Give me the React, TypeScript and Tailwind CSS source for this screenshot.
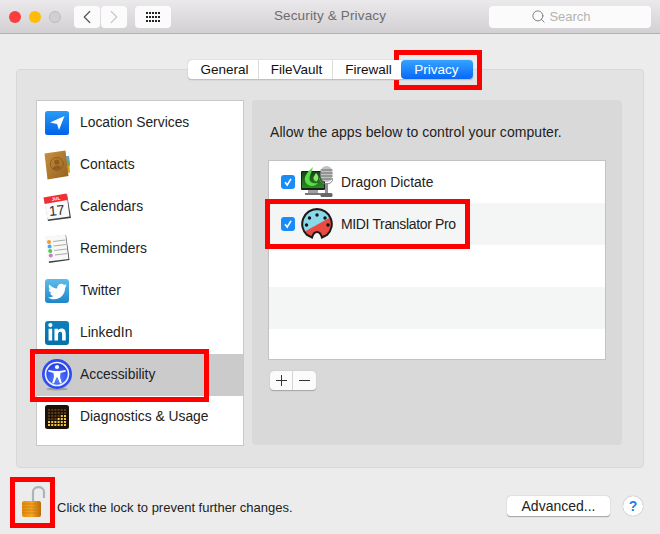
import React from 'react';
import { FaTwitter, FaLinkedinIn } from 'react-icons/fa';
import { ChevronLeft, ChevronRight, Search } from 'lucide-react';

const LocationIcon = () => (
  <svg width="24" height="24" viewBox="0 0 24 24">
    <defs>
      <linearGradient id="loc" x1="0" y1="0" x2="0" y2="1">
        <stop offset="0" stopColor="#2a9bf8" />
        <stop offset="1" stopColor="#0062e8" />
      </linearGradient>
    </defs>
    <rect width="24" height="24" rx="2.5" fill="url(#loc)" />
    <path d="M5 11.5 L19.5 5 L14 19 L12 13 Z" fill="#fff" />
  </svg>
);

const ContactsIcon = () => (
  <svg width="26" height="30" viewBox="0 0 26 30">
    <defs>
      <linearGradient id="book" x1="0" y1="0" x2="1" y2="1">
        <stop offset="0" stopColor="#c8913f" />
        <stop offset="1" stopColor="#96601f" />
      </linearGradient>
    </defs>
    <rect x="22" y="6" width="3.5" height="6" fill="#5fa7c9" transform="rotate(-6 24 10)" />
    <rect x="22.5" y="11" width="3.5" height="5" fill="#5db35d" transform="rotate(-6 24 14)" />
    <rect x="23" y="16" width="3" height="7" fill="#d9a52e" transform="rotate(-6 24 20)" />
    <path d="M0.5 3.5 L21.5 0.5 L24.5 26 L3.5 29.5 Z" fill="url(#book)" />
    <circle cx="12.8" cy="14" r="6.5" fill="none" stroke="#8f5c20" strokeWidth="1" />
    <circle cx="12.8" cy="12" r="2.6" fill="#8f5c20" />
    <path d="M8.1 18.5 Q12.8 13 17.5 17.7 Q12.8 21.5 8.1 18.5 Z" fill="#8f5c20" />
  </svg>
);

const CalendarIcon = () => (
  <svg width="28" height="28" viewBox="0 0 28 28">
    <path d="M1 5 L24 1 L28 25 L5 28 Z" fill="#3f4446" />
    <path d="M0.5 4.5 L23.5 0.5 L26.5 23.5 L4.5 26.5 Z" fill="#fafafa" />
    <path d="M0.5 4.5 L23.5 0.5 L24.5 7 L1.7 11 Z" fill="#ef2f35" />
    <text x="9" y="8" fontSize="4.5" fontWeight="700" fill="#fff" fontFamily="Liberation Sans, sans-serif" transform="rotate(-9 9 8)">JUL</text>
    <text x="6.5" y="23" fontSize="14" fill="#333" fontFamily="Liberation Sans, sans-serif" transform="rotate(-6 7 23)">17</text>
  </svg>
);

const RemindersIcon = () => (
  <svg width="26" height="30" viewBox="0 0 26 30">
    <path d="M1.5 3 L22 1 L25.5 26 L5 29 Z" fill="#3d4143" />
    <path d="M0.5 2.5 L21.5 0.5 L24.5 25 L4 27.5 Z" fill="#f8f8f6" />
    {[7, 11.5, 16, 20.5].map((y, i) => (
      <g key={y}>
        <circle cx={5 + i * 0.6} cy={y + 1} r="2" fill={['#f29a2e', '#3fa9f5', '#43d23f', '#d672dc'][i]} />
        <line x1={9 + i * 0.6} y1={y + 0.5} x2={21.5 + i * 0.6} y2={y - 1} stroke="#8a8a8a" strokeWidth="0.7" />
      </g>
    ))}
  </svg>
);

const TwitterIcon = () => (
  <div className="flex h-6 w-6 items-center justify-center rounded-[3px] bg-linear-to-b from-[#5cbcec] to-[#1d86c8] text-white">
    <FaTwitter size={19} />
  </div>
);

const LinkedinIcon = () => (
  <div className="flex h-6 w-6 items-center justify-center rounded-[3px] bg-linear-to-b from-[#0d80bd] to-[#0670a8] text-white">
    <FaLinkedinIn size={20} />
  </div>
);

const AccessibilityIcon = () => (
  <svg width="30" height="32" viewBox="0 0 30 32">
    <defs>
      <radialGradient id="acc" cx="0.5" cy="0.7" r="0.7">
        <stop offset="0" stopColor="#5a86ff" />
        <stop offset="1" stopColor="#2138e6" />
      </radialGradient>
    </defs>
    <ellipse cx="15" cy="30" rx="11" ry="1.5" fill="#a0a0a0" />
    <circle cx="15" cy="15" r="15" fill="#2f4cf2" />
    <circle cx="15" cy="15" r="11.5" fill="url(#acc)" stroke="#eef2ff" strokeWidth="1.6" />
    <circle cx="15" cy="8" r="2.1" fill="#fff" />
    <path d="M6.5 11 L12 12 H18 L23.5 11 L23.8 12.6 L18.5 14 L18 18 L19.8 24 L18 24.5 L15.6 18.6 H14.4 L12 24.5 L10.2 24 L12 18 L11.5 14 L6.2 12.6 Z" fill="#fff" />
  </svg>
);

const DiagnosticsIcon = () => {
  const heights = [2, 2, 2, 3, 4, 4];
  const cells = [];
  for (let r = 0; r < 6; r++) {
    for (let c = 0; c < 6; c++) {
      const lit = 6 - r <= heights[c];
      cells.push(<rect key={`${r}-${c}`} x={3 + c * 3.2} y={4 + r * 3} width="2" height="2" fill={lit ? '#f5c93a' : '#5c3a12'} />);
    }
  }
  return (
    <svg width="24" height="24" viewBox="0 0 24 24">
      <rect width="24" height="24" rx="2.5" fill="#1c1209" />
      {cells}
    </svg>
  );
};

const DragonIcon = () => (
  <svg width="32" height="32" viewBox="0 0 32 32">
    <defs>
      <linearGradient id="screen" x1="0" y1="0" x2="0" y2="1">
        <stop offset="0" stopColor="#17451a" />
        <stop offset="1" stopColor="#2b8a26" />
      </linearGradient>
    </defs>
    <rect x="0" y="5" width="24" height="19" rx="1" fill="#18241a" />
    <rect x="1" y="6" width="22" height="16" fill="url(#screen)" />
    <path d="M12 1 C5 7 2 12 5 17 C8 21 14 21 17 17 C13 18 8.5 17 8.5 12.5 C8.5 9 11 6 12 1 Z" fill="#55e040" />
    <path d="M15 7 C18 10 18 13 15.5 15.5 C13 15 12 13 12.5 11 Z" fill="#8ce66a" />
    <rect x="7" y="24" width="10" height="3" fill="#a0a0a0" />
    <rect x="4" y="27" width="16" height="2" fill="#777" />
    <rect x="19.5" y="0" width="12" height="16" rx="6" fill="#c2c2c2" />
    <path d="M19.5 4 H31.5 M19.5 7 H31.5 M19.5 10 H31.5 M19.5 13 H31.5" stroke="#5f5f5f" strokeWidth="0.9" />
    <path d="M18.5 12 C18.5 20 32 20 32 12" fill="none" stroke="#7c7c7c" strokeWidth="1" />
    <rect x="24" y="17" width="3" height="10" fill="#8f8f8f" />
    <rect x="19.5" y="27" width="12" height="4" rx="1.5" fill="#666" />
  </svg>
);

const MidiIcon = () => (
  <svg width="32" height="32" viewBox="0 0 32 32">
    <defs>
      <clipPath id="midi">
        <path d="M16 1 A15 15 0 0 1 26 27 L21 29.5 C20 26 18 24 16 24 C14 24 12 26 11 29.5 L6 27 A15 15 0 0 1 16 1 Z" />
      </clipPath>
    </defs>
    <g clipPath="url(#midi)">
      <rect width="32" height="32" fill="#8ad9e8" />
      <path d="M1 25 L32 8 V32 H1 Z" fill="#ea4a42" />
    </g>
    <path d="M16 1 A15 15 0 0 1 26 27 L21 29.5 C20 26 18 24 16 24 C14 24 12 26 11 29.5 L6 27 A15 15 0 0 1 16 1 Z" fill="none" stroke="#1a1a1a" strokeWidth="2" />
    {[[5.5, 17], [8.5, 10], [16, 7], [24, 10], [27, 17]].map(([cx, cy]) => (
      <circle key={cx} cx={cx} cy={cy} r="1.7" fill="#111" />
    ))}
  </svg>
);

const LockIcon = () => (
  <svg width="24" height="33" viewBox="0 0 24 33">
    <defs>
      <linearGradient id="lockBody" x1="0" y1="0" x2="1" y2="0">
        <stop offset="0" stopColor="#e08a12" />
        <stop offset="0.5" stopColor="#f5a623" />
        <stop offset="1" stopColor="#b86a08" />
      </linearGradient>
    </defs>
    <path d="M11 16 V7 C11 0.5 22 0.5 22 7 V13" fill="none" stroke="#aab4ba" strokeWidth="2.2" />
    <rect x="0" y="16" width="19" height="16" rx="2" fill="url(#lockBody)" />
    <path d="M0 19 H19 M0 22 H19 M0 25 H19 M0 28 H19" stroke="#c77a0e" strokeWidth="0.7" />
  </svg>
);

const services = [
  { label: 'Location Services', icon: <LocationIcon /> },
  { label: 'Contacts', icon: <ContactsIcon /> },
  { label: 'Calendars', icon: <CalendarIcon /> },
  { label: 'Reminders', icon: <RemindersIcon /> },
  { label: 'Twitter', icon: <TwitterIcon /> },
  { label: 'LinkedIn', icon: <LinkedinIcon /> },
  { label: 'Accessibility', icon: <AccessibilityIcon />, active: true },
  { label: 'Diagnostics & Usage', icon: <DiagnosticsIcon /> },
];

const Checkbox = () => (
  <div className="flex h-[14px] w-[14px] items-center justify-center rounded-[3px] bg-[#1a8cf8]">
    <svg width="10" height="10" viewBox="0 0 10 10">
      <path d="M2 5.2 L4.2 8 L8 1.8" fill="none" stroke="#fff" strokeWidth="1.6" />
    </svg>
  </div>
);

const RedBox = ({ className }: { className: string }) => (
  <div className={`absolute border-[5px] border-[#fe0000] ${className}`} />
);

export default function App() {
  return (
    <div className="relative h-[534px] w-[660px] overflow-hidden bg-[#ececec] font-['Liberation_Sans',sans-serif] text-[14px] text-[#222]">
      <div className="flex h-[34px] items-center border-b border-[#b1b0b1] bg-linear-to-b from-[#ebe9eb] to-[#d2d0d2]">
        <div className="ml-[9px] flex w-[52px] gap-2">
          <div className="h-3 w-3 rounded-full bg-[#fc3d3d]" />
          <div className="h-3 w-3 rounded-full bg-[#fdbc08]" />
          <div className="h-3 w-3 rounded-full border border-[#bdbdbd] bg-[#d0d0d0]" />
        </div>
        <div className="ml-[13px] flex gap-px">
          <div className="flex h-[22px] w-[26px] items-center justify-center rounded-[4px] bg-[#fbfbfb] text-[#555]">
            <ChevronLeft size={22} strokeWidth={1.3} />
          </div>
          <div className="flex h-[22px] w-[26px] items-center justify-center rounded-[4px] bg-[#fbfbfb] text-[#c9c9c9]">
            <ChevronRight size={22} strokeWidth={1.3} />
          </div>
        </div>
        <div className="ml-2 grid h-[22px] w-9 grid-cols-[repeat(5,2px)] content-center justify-center gap-x-px gap-y-[2px] rounded-[4px] bg-[#fbfbfb]">
          {Array.from({ length: 15 }).map((_, i) => (
            <div key={i} className="h-[2px] w-[2px] bg-[#222]" />
          ))}
        </div>
        <div className="flex-1 text-center text-[13.5px] tracking-[0.15px] text-[#6e6c6e]">Security &amp; Privacy</div>
        <div className="mr-[9px] flex h-[22px] w-[162px] items-center justify-center gap-[3px] rounded-[4px] bg-[#fbfbfb] pr-[18px] text-[13px] text-[#b4b4b4]">
          <Search size={15} strokeWidth={1.5} className="text-[#777]" />
          <span>Search</span>
        </div>
      </div>

      <div className="px-4 pt-[26px]">
        <div className="relative z-10 -mb-[11px] flex justify-center">
          <div className="flex h-5 items-center rounded-[4px] border-b border-[#c0c0c0] bg-white text-[13.5px] text-[#111] shadow-[0_0_1px_#888]">
            <div className="flex h-full w-[71px] items-center justify-center border-r border-[#dcdcdc] pt-px pl-[4px]">General</div>
            <div className="flex h-full w-[74px] items-center justify-center border-r border-[#dcdcdc] pt-px pl-[3px]">FileVault</div>
            <div className="flex h-full w-[68px] items-center justify-center pt-px pl-[4px]">Firewall</div>
            <div className="flex h-full w-[72px] items-center justify-center rounded-[4px] bg-linear-to-b from-[#36a3fd] to-[#0a66f8] pt-px text-white">Privacy</div>
          </div>
        </div>

        <div className="flex h-[399px] gap-2 rounded-[4px] border border-[#d8d8d8] bg-[#e3e3e3] px-[19px] pt-[30px]">
          <div className="h-[346px] w-[208px] border border-[#c8c8c8] bg-white pt-[1px]">
            {services.map(s => (
              <div key={s.label} className={`flex h-[42px] items-center ${s.active ? 'bg-[#cbcbcb]' : ''}`}>
                <div className="flex w-[43px] shrink-0 items-center justify-center pr-[3px]">{s.icon}</div>
                <span className="pb-[2px] text-[13.85px]">{s.label}</span>
              </div>
            ))}
          </div>

          <div className="h-[345px] w-[370px] rounded-[4px] bg-[#d9d9d9] px-4 pt-[22px]">
            <div className="pl-[2px] tracking-[0.05px]">Allow the apps below to control your computer.</div>
            <div className="mt-[17px] h-[200px] w-[338px] border border-[#c2c2c2] bg-white">
              <div className="flex h-[42px] items-center">
                <div className="ml-[12px]"><Checkbox /></div>
                <div className="ml-[3px] w-[41px] pl-[3px]"><DragonIcon /></div>
                <span className="ml-[2px] text-[13.85px]">Dragon Dictate</span>
              </div>
              <div className="flex h-[42px] items-center bg-[#f4f5f5]">
                <div className="ml-[12px]"><Checkbox /></div>
                <div className="ml-[3px] w-[41px] pl-[3px]"><MidiIcon /></div>
                <span className="ml-[2px] tracking-[-0.35px]">MIDI Translator Pro</span>
              </div>
              <div className="h-[42px]" />
              <div className="h-[42px] bg-[#f4f5f5]" />
              <div className="h-[30px]" />
            </div>
            <div className="mt-[11px] ml-[2px] flex h-5 w-[46px] rounded-[4px] border-b border-[#aaa] bg-[#fbfbfb] shadow-[0_0_1px_#999]">
              <div className="flex w-[23px] items-center justify-center border-r border-[#d4d4d4]">
                <svg width="11" height="11" viewBox="0 0 11 11"><path d="M5.5 0 V11 M0 5.5 H11" stroke="#333" strokeWidth="1" /></svg>
              </div>
              <div className="flex w-[23px] items-center justify-center">
                <svg width="11" height="11" viewBox="0 0 11 11"><path d="M0 5.5 H11" stroke="#333" strokeWidth="1" /></svg>
              </div>
            </div>
          </div>
        </div>
      </div>

      <div className="mt-[17px] flex items-center pl-[22px] pr-[17px]">
        <LockIcon />
        <span className="ml-[11px] mt-[12px] text-[13px]">Click the lock to prevent further changes.</span>
        <div className="ml-auto mt-[10px] flex h-[21px] w-[103px] items-center justify-center rounded-[4px] border-b border-[#aaa] bg-white shadow-[0_0_1px_#888]">Advanced...</div>
        <div className="ml-[13px] mt-[9px] flex h-[20px] w-[20px] items-center justify-center rounded-full bg-white text-[14px] font-bold text-[#1b7ff0] shadow-[0_0_1px_#777]">?</div>
      </div>

      <RedBox className="left-[394px] top-[50px] h-[40px] w-[88px]" />
      <RedBox className="left-[30px] top-[349px] h-[53px] w-[179px]" />
      <RedBox className="left-[265px] top-[199px] h-[50px] w-[205px]" />
      <RedBox className="left-[10px] top-[477px] h-[51px] w-[45px]" />
    </div>
  );
}
